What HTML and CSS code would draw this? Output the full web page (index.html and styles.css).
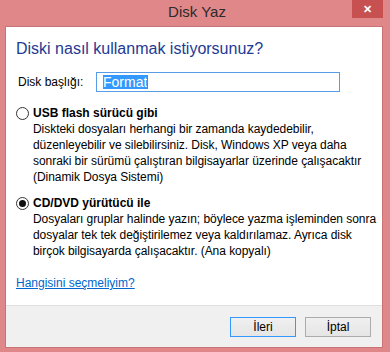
FILE: index.html
```html
<!DOCTYPE html>
<html lang="tr">
<head>
    <meta charset="UTF-8">
    <title>Disk Yaz</title>
    <link rel="stylesheet" href="styles.css">
</head>
<body>
    <div class="window">
        <div class="titlebar">
            <div class="title">Disk Yaz</div>
            <div class="close">&#x2715;</div>
        </div>
        <div class="client">
            <div class="content">
                <h1 class="instruction">Diski nasıl kullanmak istiyorsunuz?</h1>
                <div class="field">
                    <label class="field-label">Disk başlığı:</label>
                    <div class="textbox"><span class="selected">Format</span><span class="caret"></span></div>
                </div>
                <div class="option">
                    <div class="option-head">
                        <span class="radio"></span>
                        <span class="option-title">USB flash sürücü gibi</span>
                    </div>
                    <p class="option-desc">Diskteki dosyaları herhangi bir zamanda kaydedebilir,<br>düzenleyebilir ve silebilirsiniz. Disk, Windows XP veya daha<br>sonraki bir sürümü çalıştıran bilgisayarlar üzerinde çalışacaktır<br>(Dinamik Dosya Sistemi)</p>
                </div>
                <div class="option option-second">
                    <div class="option-head">
                        <span class="radio checked"></span>
                        <span class="option-title">CD/DVD yürütücü ile</span>
                    </div>
                    <p class="option-desc">Dosyaları gruplar halinde yazın; böylece yazma işleminden sonra<br>dosyalar tek tek değiştirilemez veya kaldırılamaz. Ayrıca disk<br>birçok bilgisayarda çalışacaktır. (Ana kopyalı)</p>
                </div>
                <a class="help-link" href="#">Hangisini seçmeliyim?</a>
            </div>
            <div class="footer">
                <button class="btn btn-default">İleri</button>
                <button class="btn">İptal</button>
            </div>
        </div>
    </div>
</body>
</html>
```

FILE: styles.css
```css
:root {
    --frame: #e0878a;
    --frame-dark: #c97376;
    --ui-font: 'Liberation Sans', Arial, sans-serif;
}

body {
    margin: 0;
    background: var(--frame);
    font-family: var(--ui-font);
    font-size: 12px;
    color: #000;
}

.window {
    width: 390px;
    height: 352px;
    display: flex;
    flex-direction: column;
    overflow: hidden;
}

.titlebar {
    height: 27px;
    position: relative;
    display: flex;
    justify-content: center;
}

.title {
    font-size: 15px;
    line-height: 24px;
    color: #2b2b2b;
    padding-left: 4px;
}

.close {
    position: absolute;
    top: 0;
    right: 7px;
    width: 31px;
    height: 18px;
    background: #c75050;
    color: #fff;
    font-size: 11px;
    font-weight: bold;
    line-height: 18px;
    text-align: center;
}

.client {
    margin: 0 8px 0 6px;
    height: 320px;
    display: flex;
    flex-direction: column;
    box-shadow: 0 0 0 1px var(--frame-dark);
}

.content {
    flex: 1;
    background: #fff;
    padding: 12px 10px 0 10px;
}

.instruction {
    margin: 0;
    font-size: 16px;
    font-weight: normal;
    line-height: 20px;
    color: #1e3a94;
}

.field {
    display: flex;
    align-items: center;
    margin-top: 13px;
    height: 20px;
}

.field-label {
    width: 78px;
    padding-left: 2px;
}

.textbox {
    width: 236px;
    height: 18px;
    border: 1px solid #569de5;
    display: flex;
    align-items: center;
    padding-left: 6px;
}

.selected {
    background: #3399ff;
    color: #fff;
    font-size: 14px;
    line-height: 14px;
}

.caret {
    width: 1px;
    height: 14px;
    background: #d46a00;
}

.option {
    margin-top: 13px;
}

.option-second {
    margin-top: 10px;
}

.option-head {
    display: flex;
    align-items: center;
    height: 16px;
}

.radio {
    width: 11px;
    height: 11px;
    border: 1px solid #333;
    border-radius: 50%;
    background: #fff;
    margin-right: 4px;
    display: flex;
    align-items: center;
    justify-content: center;
}

.radio.checked::after {
    content: '';
    width: 7px;
    height: 7px;
    border-radius: 50%;
    background: #111;
}

.option-title {
    font-weight: bold;
    line-height: 16px;
}

.option-desc {
    margin: 0;
    padding-left: 17px;
    line-height: 16px;
    white-space: nowrap;
    letter-spacing: -0.05px;
}

.help-link {
    display: block;
    margin-top: 16px;
    color: #0066cc;
    line-height: 16px;
}

.footer {
    height: 42px;
    border-top: 1px solid #dfdfdf;
    background: #f0f0f0;
    display: flex;
    justify-content: flex-end;
    align-items: flex-start;
    gap: 9px;
    padding: 11px 11px 0 0;
    box-sizing: border-box;
}

.btn {
    width: 66px;
    height: 20px;
    border: 1px solid #acacac;
    background: linear-gradient(#f0f0f0, #e5e5e5);
    font-family: var(--ui-font);
    font-size: 12px;
    color: #000;
    padding: 0;
}

.btn-default {
    border-color: #3399ff;
}
```
